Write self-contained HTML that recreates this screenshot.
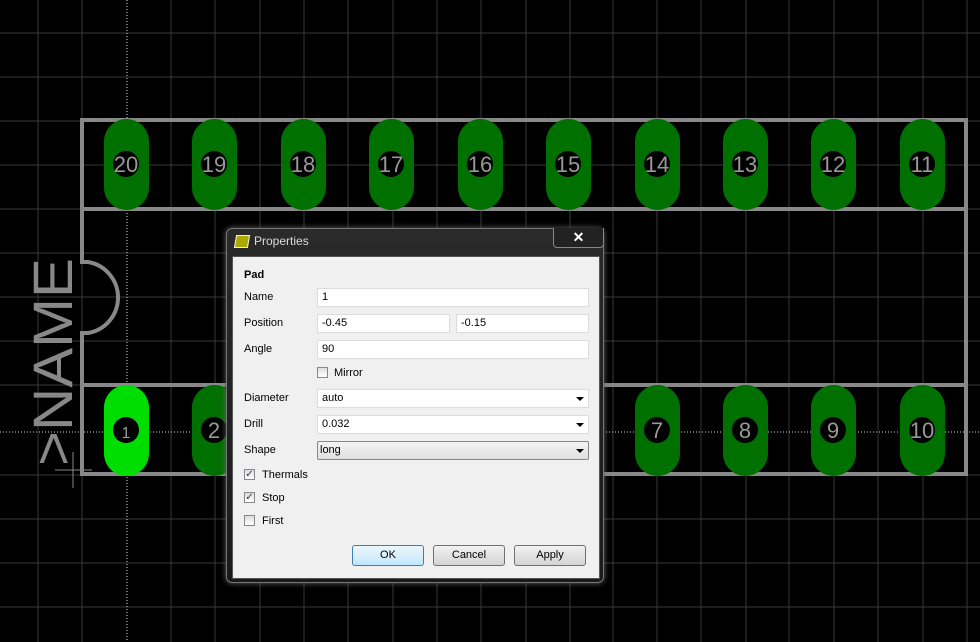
<!DOCTYPE html>
<html><head><meta charset="utf-8"><style>
body{margin:0;width:980px;height:642px;overflow:hidden;background:#000;font-family:"Liberation Sans",sans-serif;}
#dlg{position:absolute;left:226px;top:228px;width:378px;height:355px;border-radius:6px;background:linear-gradient(#2a2a2a,#1a1a1a);box-shadow:0 0 6px #666;border:1px solid #777;box-sizing:border-box}
#client{position:absolute;left:5px;top:27px;width:368px;height:323px;background:#f0f0f0;border:1px solid #555;box-sizing:border-box;font-size:11px;color:#000}
.l{position:absolute;left:11px}
.in{position:absolute;height:19px;background:#fff;border:1px solid #dcdcdc;box-sizing:border-box;padding:2px 0 0 4px;font-size:11px}
.arr{position:absolute;right:4px;top:7px;width:0;height:0;border-left:4px solid transparent;border-right:4px solid transparent;border-top:4px solid #000}
.cb{position:absolute;width:11px;height:11px;border:1px solid #888;background:linear-gradient(#ddd,#fff);box-sizing:border-box;font-size:10px;line-height:9px;text-align:center;color:#335}
.btn{position:absolute;top:288px;width:72px;height:21px;border:1px solid #707070;border-radius:3px;background:linear-gradient(#f2f2f2,#e2e2e2 50%,#d4d4d4);box-sizing:border-box;text-align:center;line-height:19px;font-size:11px}
</style></head><body>
<svg width="980" height="642" style="position:absolute;left:0;top:0">
<g stroke="#383838" stroke-width="1">
<line x1="38" y1="0" x2="38" y2="642"/><line x1="82" y1="0" x2="82" y2="642"/><line x1="171" y1="0" x2="171" y2="642"/><line x1="215" y1="0" x2="215" y2="642"/><line x1="260" y1="0" x2="260" y2="642"/><line x1="304" y1="0" x2="304" y2="642"/><line x1="348" y1="0" x2="348" y2="642"/><line x1="393" y1="0" x2="393" y2="642"/><line x1="437" y1="0" x2="437" y2="642"/><line x1="481" y1="0" x2="481" y2="642"/><line x1="526" y1="0" x2="526" y2="642"/><line x1="570" y1="0" x2="570" y2="642"/><line x1="613" y1="0" x2="613" y2="642"/><line x1="657" y1="0" x2="657" y2="642"/><line x1="701" y1="0" x2="701" y2="642"/><line x1="746" y1="0" x2="746" y2="642"/><line x1="789" y1="0" x2="789" y2="642"/><line x1="834" y1="0" x2="834" y2="642"/><line x1="878" y1="0" x2="878" y2="642"/><line x1="923" y1="0" x2="923" y2="642"/><line x1="967" y1="0" x2="967" y2="642"/>
<line x1="0" y1="33" x2="980" y2="33"/><line x1="0" y1="77" x2="980" y2="77"/><line x1="0" y1="121" x2="980" y2="121"/><line x1="0" y1="165" x2="980" y2="165"/><line x1="0" y1="209" x2="980" y2="209"/><line x1="0" y1="253" x2="980" y2="253"/><line x1="0" y1="297" x2="980" y2="297"/><line x1="0" y1="341" x2="980" y2="341"/><line x1="0" y1="385" x2="980" y2="385"/><line x1="0" y1="475" x2="980" y2="475"/><line x1="0" y1="519" x2="980" y2="519"/><line x1="0" y1="563" x2="980" y2="563"/><line x1="0" y1="607" x2="980" y2="607"/>
</g>
<line x1="127" y1="0" x2="127" y2="642" stroke="#ddd" stroke-dasharray="1,2"/>
<line x1="0" y1="432" x2="980" y2="432" stroke="#ddd" stroke-dasharray="1,2"/>
<g stroke="#888" stroke-width="4" fill="none">
<path d="M82,120 H966 V474 H82 V333 H88 A36,36 0 0 0 88,262 H82 Z"/>
<line x1="82" y1="209" x2="966" y2="209"/><line x1="82" y1="385" x2="966" y2="385"/>
</g>
<g fill="#007000">
<rect x="104" y="119" width="45" height="91" rx="22.5"/><rect x="192" y="119" width="45" height="91" rx="22.5"/><rect x="281" y="119" width="45" height="91" rx="22.5"/><rect x="369" y="119" width="45" height="91" rx="22.5"/><rect x="458" y="119" width="45" height="91" rx="22.5"/><rect x="546" y="119" width="45" height="91" rx="22.5"/><rect x="635" y="119" width="45" height="91" rx="22.5"/><rect x="723" y="119" width="45" height="91" rx="22.5"/><rect x="811" y="119" width="45" height="91" rx="22.5"/><rect x="900" y="119" width="45" height="91" rx="22.5"/>
<rect x="192" y="385" width="45" height="91" rx="22.5"/><rect x="635" y="385" width="45" height="91" rx="22.5"/><rect x="723" y="385" width="45" height="91" rx="22.5"/><rect x="811" y="385" width="45" height="91" rx="22.5"/><rect x="900" y="385" width="45" height="91" rx="22.5"/>
</g>
<rect x="104" y="385" width="45" height="91" rx="22.5" fill="#00dd00"/>
<g fill="#000">
<circle cx="126" cy="164" r="13"/><circle cx="214" cy="164" r="13"/><circle cx="303" cy="164" r="13"/><circle cx="391" cy="164" r="13"/><circle cx="480" cy="164" r="13"/><circle cx="568" cy="164" r="13"/><circle cx="657" cy="164" r="13"/><circle cx="745" cy="164" r="13"/><circle cx="833" cy="164" r="13"/><circle cx="922" cy="164" r="13"/>
<circle cx="126" cy="430" r="13"/><circle cx="214" cy="430" r="13"/><circle cx="657" cy="430" r="13"/><circle cx="745" cy="430" r="13"/><circle cx="833" cy="430" r="13"/><circle cx="922" cy="430" r="13"/>
</g>
<g fill="#999" font-family="Liberation Sans" font-size="22" text-anchor="middle">
<text x="126" y="172">20</text><text x="214" y="172">19</text><text x="303" y="172">18</text><text x="391" y="172">17</text><text x="480" y="172">16</text><text x="568" y="172">15</text><text x="657" y="172">14</text><text x="745" y="172">13</text><text x="833" y="172">12</text><text x="922" y="172">11</text>
<text x="126" y="438" font-size="16">1</text><text x="214" y="438">2</text><text x="657" y="438">7</text><text x="745" y="438">8</text><text x="833" y="438">9</text><text x="922" y="438">10</text>
</g>
<text transform="translate(72,466) rotate(-90)" fill="#888" font-family="Liberation Sans" font-size="56" textLength="208" lengthAdjust="spacingAndGlyphs">&gt;NAME</text>
<g stroke="#888"><line x1="55" y1="470" x2="92" y2="470"/><line x1="73" y1="452" x2="73" y2="488"/></g>
</svg>
<div id="dlg">
<div style="position:absolute;left:8px;top:6px;width:12px;height:11px;background:#aa0;border:1px solid #eee;transform:skewX(-10deg)"></div>
<div style="position:absolute;left:27px;top:5px;font-size:12px;color:#ddd">Properties</div>
<div style="position:absolute;left:326px;top:-1px;width:49px;height:19px;border:1px solid #888;border-top:none;border-radius:0 0 4px 4px;background:#222;color:#fff;text-align:center;font-weight:bold;font-size:14px;line-height:18px">✕</div>
<div id="client">
<div class="l" style="top:12px;font-weight:bold">Pad</div>
<div class="l" style="top:34px">Name</div><div class="in" style="left:84px;top:31px;width:272px">1</div>
<div class="l" style="top:60px">Position</div><div class="in" style="left:84px;top:57px;width:133px">-0.45</div><div class="in" style="left:223px;top:57px;width:133px">-0.15</div>
<div class="l" style="top:86px">Angle</div><div class="in" style="left:84px;top:83px;width:272px">90</div>
<div class="cb" style="left:84px;top:110px"></div><div style="position:absolute;left:101px;top:110px">Mirror</div>
<div class="l" style="top:135px">Diameter</div><div class="in" style="left:84px;top:132px;width:272px">auto<div class="arr"></div></div>
<div class="l" style="top:161px">Drill</div><div class="in" style="left:84px;top:158px;width:272px">0.032<div class="arr"></div></div>
<div class="l" style="top:187px">Shape</div><div class="in" style="left:84px;top:184px;width:272px;border-color:#888;border-radius:2px;background:linear-gradient(#f4f4f4,#e0e0e0);padding-left:2px">long<div class="arr"></div></div>
<div class="cb" style="left:11px;top:212px">✓</div><div style="position:absolute;left:29px;top:212px">Thermals</div>
<div class="cb" style="left:11px;top:235px">✓</div><div style="position:absolute;left:29px;top:235px">Stop</div>
<div class="cb" style="left:11px;top:258px"></div><div style="position:absolute;left:29px;top:258px">First</div>
<div class="btn" style="left:119px;border-color:#3c7fb1;background:linear-gradient(#eaf6fd,#d9f0fc 50%,#bee6fd)">OK</div>
<div class="btn" style="left:200px">Cancel</div>
<div class="btn" style="left:281px">Apply</div>
</div></div>
</body></html>
